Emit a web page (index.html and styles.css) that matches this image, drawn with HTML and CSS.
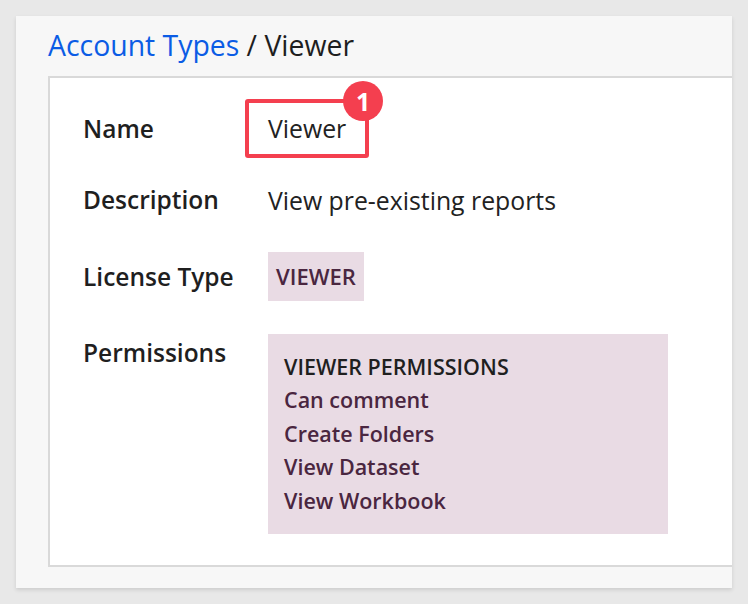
FILE: index.html
```html
<!DOCTYPE html>
<html>
<head>
<meta charset="utf-8">
<link rel="stylesheet" href="styles.css">
</head>
<body>
<div class="panel">
  <div class="crumbs"><a class="crumb-link" href="#">Account Types</a> / Viewer</div>
  <div class="card">
    <div class="row row-name">
      <div class="label">Name</div>
      <div class="value">
        <div class="highlight">Viewer<span class="step">1</span></div>
      </div>
    </div>
    <div class="row row-desc">
      <div class="label">Description</div>
      <div class="value">View pre-existing reports</div>
    </div>
    <div class="row row-license">
      <div class="label">License Type</div>
      <div class="value"><span class="tag">VIEWER</span></div>
    </div>
    <div class="row row-perms">
      <div class="label">Permissions</div>
      <div class="value">
        <div class="perms">
          <div class="perms-title">VIEWER PERMISSIONS</div>
          <div class="perm">Can comment</div>
          <div class="perm">Create Folders</div>
          <div class="perm">View Dataset</div>
          <div class="perm">View Workbook</div>
        </div>
      </div>
    </div>
  </div>
</div>
</body>
</html>
```
FILE: styles.css
```css
html, body {
  margin: 0;
  padding: 0;
}
body {
  background: #e8e8e8;
  padding: 16px;
  font-family: "Open Sans", "Noto Sans", sans-serif;
  color: #222;
}
.panel {
  width: 716px;
  height: 572px;
  box-sizing: border-box;
  background: #f7f7f7;
  box-shadow: 0 2px 4px rgba(0,0,0,0.12);
  padding: 0 0 0 32px;
}
.crumbs {
  font-size: 28.4px;
  line-height: 34px;
  color: #1e1e1e;
  height: 60px;
  padding-top: 12px;
  box-sizing: border-box;
  white-space: nowrap;
}
.crumb-link {
  color: #0b5ce5;
  text-decoration: none;
}
.card {
  height: 491px;
  box-sizing: border-box;
  background: #fff;
  border: 2px solid #d9d9d9;
  border-right: none;
  padding: 21px 0 0 33px;
}
.row {
  display: grid;
  grid-template-columns: 185px 1fr;
  align-items: start;
}
.label {
  font-size: 24.5px;
  font-weight: 600;
  color: #1f1f1f;
  white-space: nowrap;
}
.value {
  font-size: 24.8px;
  color: #222;
  white-space: nowrap;
}
.row-name .label { padding-top: 17px; line-height: 25px; }
.highlight {
  position: relative;
  display: inline-block;
  margin-left: -23px;
  border: 4px solid #f43f4f;
  border-radius: 3px;
  padding: 13px 19px 13px 19px;
  line-height: 25px;
}
.step {
  position: absolute;
  top: -22px;
  right: -18px;
  width: 40px;
  height: 40px;
  border-radius: 50%;
  background: #f43f4f;
  color: #fff;
  font-weight: 700;
  font-size: 25px;
  line-height: 40px;
  text-align: center;
}
.row-desc { margin-top: 29px; }
.row-desc .label, .row-desc .value { line-height: 26px; }
.row-license { margin-top: 39px; align-items: center; }
.tag {
  display: inline-block;
  background: #e9dbe4;
  color: #4a2640;
  font-size: 22px;
  font-weight: 600;
  padding: 12px 8px;
  line-height: 25px;
}
.row-perms { margin-top: 33px; }
.row-perms .label { padding-top: 2px; }
.perms {
  width: 400px;
  height: 200px;
  box-sizing: border-box;
  background: #e9dbe4;
  padding: 16px 16px;
  font-size: 21.5px;
  font-weight: 600;
  line-height: 33.4px;
}
.perms-title { color: #1f1f1f; }
.perm { color: #4a2640; }
```
